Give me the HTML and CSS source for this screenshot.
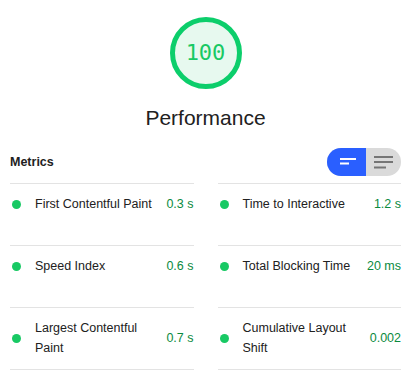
FILE: index.html
```html
<!DOCTYPE html>
<html lang="en">
<head>
    <meta charset="UTF-8">
    <meta name="viewport" content="width=device-width, initial-scale=1.0">
    <title>Performance</title>
    <link rel="stylesheet" href="styles.css">
</head>
<body>
    <div class="report">
        <div class="gauge">
            <svg class="gauge-ring" width="72" height="72" viewBox="0 0 72 72">
                <circle cx="36" cy="36" r="33.5" fill="#e7f9ef" stroke="#0cce6b" stroke-width="5"/>
            </svg>
            <span class="gauge-score">100</span>
        </div>
        <h1 class="category-title">Performance</h1>

        <div class="metrics-header">
            <h2>Metrics</h2>
            <div class="toggle">
                <button class="toggle-btn toggle-btn--active" aria-label="Compact view">
                    <svg width="16" height="8" viewBox="0 0 16 8">
                        <rect x="0" y="0" width="16" height="2" fill="#fff"/>
                        <rect x="0" y="4.5" width="9" height="2" fill="#fff"/>
                    </svg>
                </button>
                <button class="toggle-btn" aria-label="Expanded view">
                    <svg width="19" height="13" viewBox="0 0 19 13">
                        <rect x="0" y="0" width="19" height="2" fill="#757575"/>
                        <rect x="0" y="5" width="19" height="2" fill="#757575"/>
                        <rect x="0" y="10.5" width="12" height="2" fill="#757575"/>
                    </svg>
                </button>
            </div>
        </div>

        <div class="metrics-grid">
            <div class="metric">
                <div class="metric-row">
                    <span class="metric-dot"></span>
                    <span class="metric-title">First Contentful Paint</span>
                    <span class="metric-value">0.3 s</span>
                </div>
            </div>
            <div class="metric">
                <div class="metric-row">
                    <span class="metric-dot"></span>
                    <span class="metric-title">Time to Interactive</span>
                    <span class="metric-value">1.2 s</span>
                </div>
            </div>
            <div class="metric">
                <div class="metric-row">
                    <span class="metric-dot"></span>
                    <span class="metric-title">Speed Index</span>
                    <span class="metric-value">0.6 s</span>
                </div>
            </div>
            <div class="metric">
                <div class="metric-row">
                    <span class="metric-dot"></span>
                    <span class="metric-title">Total Blocking Time</span>
                    <span class="metric-value">20 ms</span>
                </div>
            </div>
            <div class="metric">
                <div class="metric-row">
                    <span class="metric-dot"></span>
                    <span class="metric-title">Largest Contentful Paint</span>
                    <span class="metric-value">0.7 s</span>
                </div>
            </div>
            <div class="metric">
                <div class="metric-row">
                    <span class="metric-dot"></span>
                    <span class="metric-title">Cumulative Layout Shift</span>
                    <span class="metric-value">0.002</span>
                </div>
            </div>
        </div>
    </div>
</body>
</html>
```

FILE: styles.css
```css
/* Lighthouse-style performance card */
body {
    margin: 0;
    background: #fff;
    color: #212121;
    font-family: 'Liberation Sans', Arial, sans-serif;
}

.report {
    padding: 17px 10px 0;
}

.gauge {
    position: relative;
    width: 72px;
    height: 72px;
    margin: 0 auto;
}

.gauge-ring {
    display: block;
}

.gauge-score {
    position: absolute;
    left: 0;
    right: 0;
    top: 0;
    line-height: 72px;
    text-align: center;
    font-family: 'DejaVu Sans Mono', monospace;
    font-size: 22px;
    color: #18c964;
}

.category-title {
    margin: 15px 0 0;
    font-size: 21px;
    line-height: 28px;
    font-weight: normal;
    text-align: center;
    color: #212121;
}

.metrics-header {
    display: flex;
    align-items: center;
    justify-content: space-between;
    margin-top: 16px;
    margin-bottom: 7px;
}

.metrics-header h2 {
    margin: 0;
    font-size: 12.5px;
    font-weight: bold;
    color: #212121;
}

.toggle {
    display: flex;
    width: 74px;
    height: 28px;
    border-radius: 14px;
    overflow: hidden;
    background: #dadada;
}

.toggle-btn {
    flex: 1;
    display: flex;
    align-items: center;
    justify-content: center;
    padding: 0;
    border: none;
    background: transparent;
}

.toggle-btn svg {
    display: block;
}

.toggle-btn--active {
    background: #2a5fff;
    padding-left: 3px;
}

.metrics-grid {
    display: grid;
    grid-template-columns: 1fr 1fr;
    column-gap: 24px;
}

.metric {
    height: 40px;
    padding: 10px 0 11px;
    border-bottom: 1px solid #e3e3e3;
}

.metric:nth-child(-n+2) {
    border-top: 1px solid #e3e3e3;
}

.metric-row {
    display: flex;
    align-items: center;
    font-size: 12.5px;
    line-height: 20px;
}

.metric-dot {
    flex: none;
    width: 9px;
    height: 9px;
    margin: 0 14px 0 2px;
    border-radius: 50%;
    background: #18c964;
}

.metric-title {
    flex: 1;
    color: #212121;
}

.metric-value {
    flex: none;
    margin-left: 10px;
    color: #0b8a3e;
}
```
